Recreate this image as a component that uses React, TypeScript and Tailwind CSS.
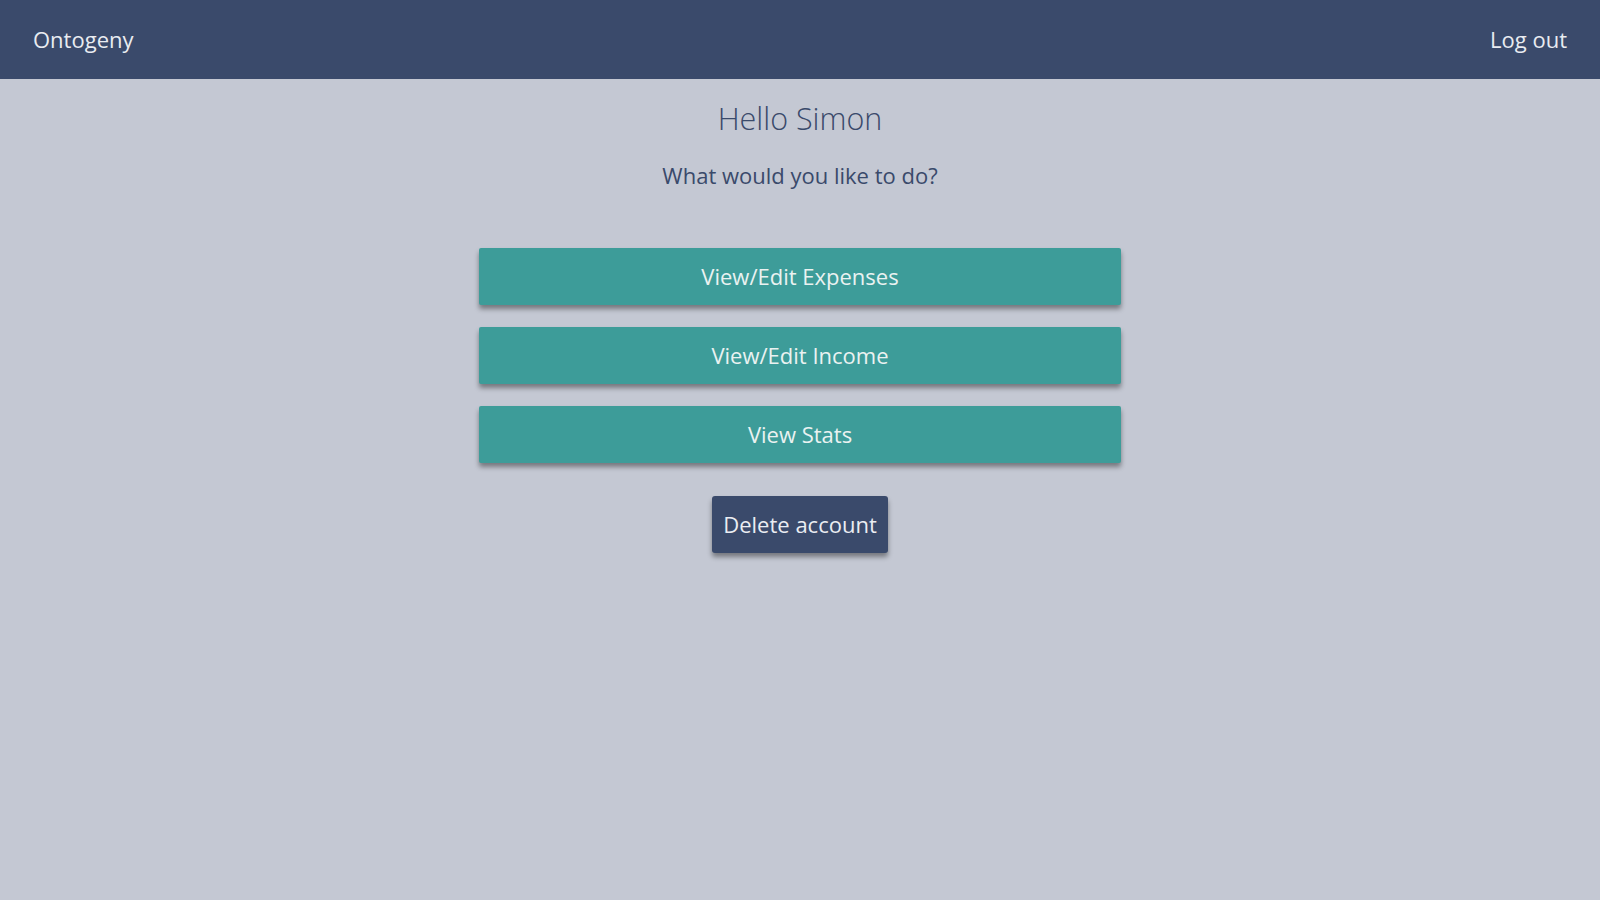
const actions = ["View/Edit Expenses", "View/Edit Income", "View Stats"];

export default function App() {
    return (
        <div className="min-h-screen bg-[#c4c8d3] font-['Open_Sans',sans-serif]">
            <header className="h-[79px] bg-[#3a4a6b] flex items-center justify-between px-[33px] text-[#e9ecf1] text-[22px]">
                <span>Ontogeny</span>
                <span>Log out</span>
            </header>

            <main className="flex flex-col items-center">
                <h1 className="mt-[20px] text-[30.5px] leading-[38px] font-light text-[#3a4a6b]">Hello Simon</h1>
                <p className="mt-[23px] text-[22px] leading-[30px] text-[#3a4a6b]">What would you like to do?</p>

                <div className="mt-[58px] flex flex-col gap-[22px] w-[642px]">
                    {actions.map((label) => (
                        <button
                            key={label}
                            className="h-[57px] w-full rounded-[2px] bg-[#3d9c99] text-[#eaf2f1] text-[22px] shadow-[0_4px_5px_rgba(0,0,0,0.4)]"
                        >
                            {label}
                        </button>
                    ))}
                </div>

                <button className="mt-[33px] h-[57px] px-[11px] rounded-[3px] bg-[#3a4a6b] text-[#eaedf2] text-[22px] shadow-[0_4px_5px_rgba(0,0,0,0.4)]">
                    Delete account
                </button>
            </main>
        </div>
    );
}
